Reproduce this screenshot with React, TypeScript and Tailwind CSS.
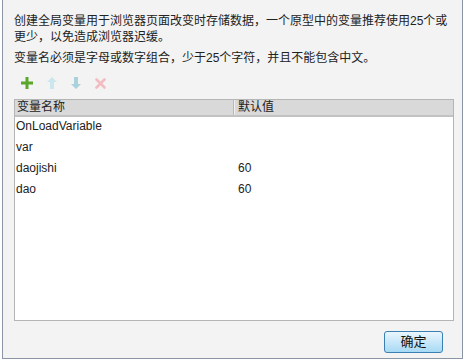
const font = { fontFamily: '"Liberation Sans", "Noto Sans CJK SC", sans-serif' };

const rows = [
  { name: 'OnLoadVariable', value: '' },
  { name: 'var', value: '' },
  { name: 'daojishi', value: '60' },
  { name: 'dao', value: '60' },
];

const Plus = () => (
  <svg width="12" height="12" viewBox="0 0 12 12">
    <path d="M4.5 0h3v4.5H12v3H7.5V12h-3V7.5H0v-3h4.5z" fill="#5aa72c" />
  </svg>
);

const Arrow = ({ down }: { down?: boolean }) => (
  <svg width="10" height="12" viewBox="0 0 10 12" style={{ transform: down ? 'rotate(180deg)' : undefined }}>
    <path d="M5 0L10 5H7v7H3V5H0z" fill={down ? '#a9d2dc' : '#cbe6ec'} />
  </svg>
);

const Cross = () => (
  <svg width="11" height="11" viewBox="0 0 11 11">
    <path d="M1.5 1.5l8 8M9.5 1.5l-8 8" stroke="#f3bcc0" strokeWidth="2.6" strokeLinecap="round" />
  </svg>
);

export default function App() {
  return (
    <div className="w-[465px] h-[360px] bg-white" style={font}>
      <div className="h-[359px] ml-[2px] mr-[2px] border-l border-r border-b border-[#8a96a6] bg-[#f3f3f3] flex flex-col text-[12px] text-[#222]">
        <div className="pl-[11px] pr-[8px] pt-[13px] leading-[16px]">
          <p>创建全局变量用于浏览器页面改变时存储数据，一个原型中的变量推荐使用25个或更少，以免造成浏览器迟缓。</p>
          <p className="mt-[5px]">变量名必须是字母或数字组合，少于25个字符，并且不能包含中文。</p>
        </div>
        <div className="flex items-center h-[14px] mt-[10px] pl-[18px] gap-[14px]">
          <Plus />
          <Arrow />
          <Arrow down />
          <Cross />
        </div>
        <div className="ml-[11px] mr-[8px] mt-[9px] h-[222px] border border-[#b5b5b5] bg-white flex flex-col">
          <div className="flex h-[17px] bg-[#d9d9d9] border-b-2 border-[#c2c2c2] leading-[15px]">
            <div className="w-[219px] pl-[2px] border-r border-[#b9b9b9]">变量名称</div>
            <div className="flex-1 pl-[3px] border-l border-[#f0f0f0]">默认值</div>
          </div>
          {rows.map((r) => (
            <div key={r.name} className="flex h-[21px] items-center pb-[3px]">
              <div className="w-[220px] pl-[1px]">{r.name}</div>
              <div className="flex-1 pl-[3px]">{r.value}</div>
            </div>
          ))}
        </div>
        <div className="flex justify-end mt-[10px] mr-[19px]">
          <button className="w-[59px] h-[22px] rounded-[3px] border border-[#3c7fb1] bg-gradient-to-b from-[#eaf6fd] to-[#a7d9f5] text-[13px] text-[#111] leading-[20px]">
            确定
          </button>
        </div>
      </div>
    </div>
  );
}
